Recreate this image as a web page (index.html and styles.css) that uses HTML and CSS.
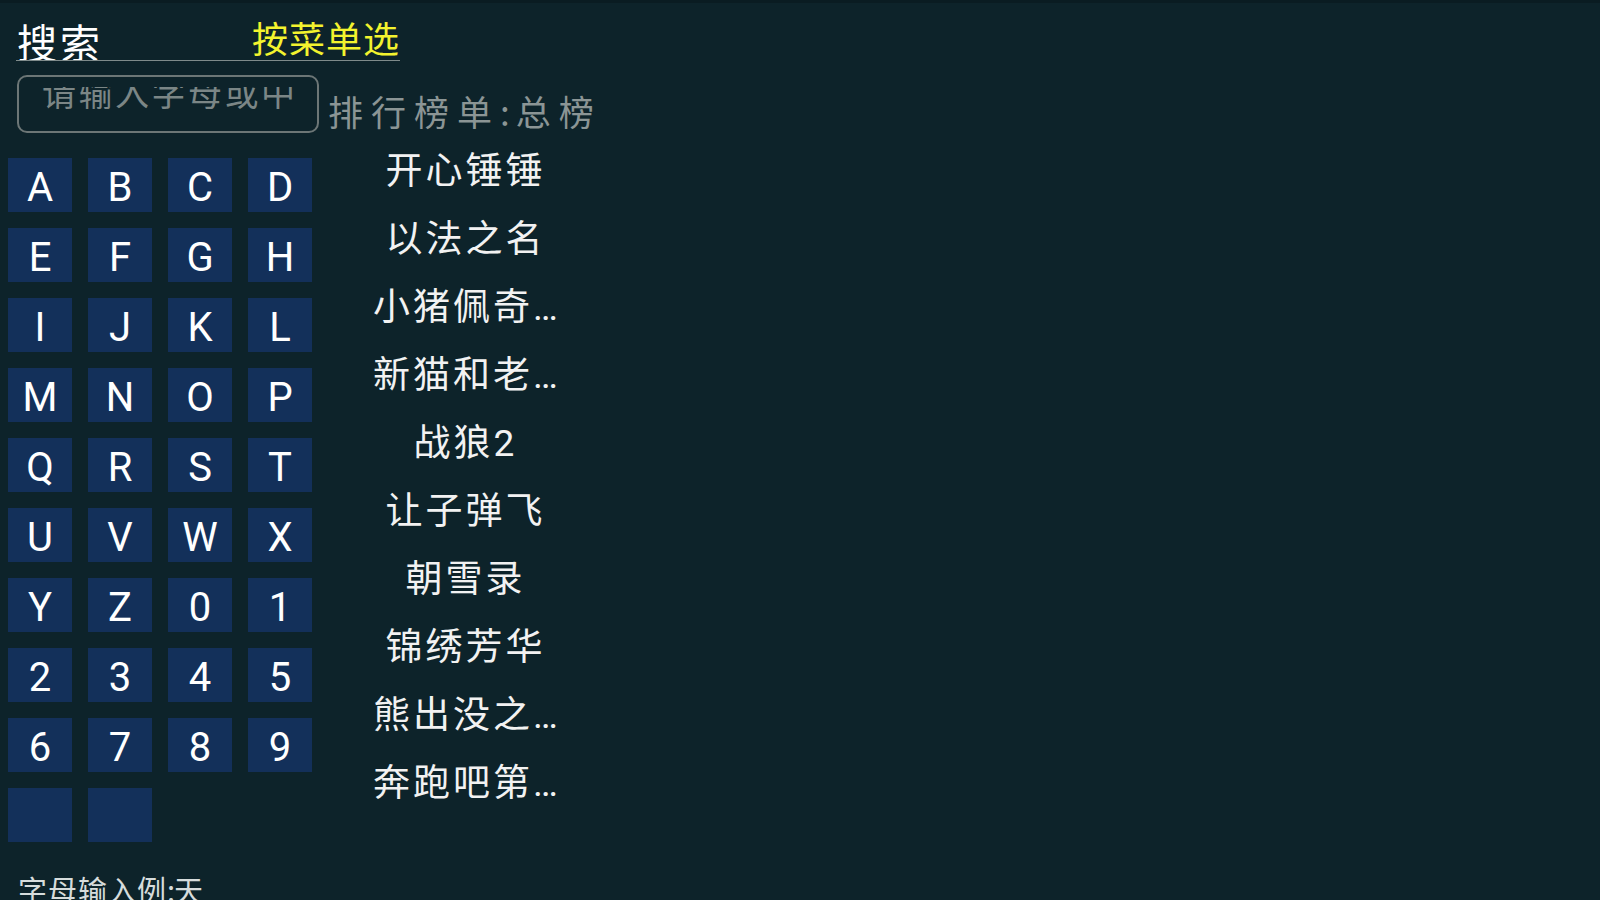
FILE: index.html
```html
<!DOCTYPE html>
<html lang="zh-CN">
<head>
<meta charset="utf-8">
<title>搜索</title>
<link rel="stylesheet" href="styles.css">
</head>
<body>
<div class="page">
  <div class="header">
    <div class="title">搜索</div>
    <div class="menu">按菜单选</div>
  </div>
  <div class="row2">
    <div class="input">
      <div class="ph-clip"><div class="ph">请输入字母或中文</div></div>
    </div>
    <div class="rank-title">排行榜单<span class="colon">:</span>总榜</div>
  </div>
  <div class="main">
    <div class="left">
      <div class="keypad">
        <div class="key">A</div><div class="key">B</div><div class="key">C</div><div class="key">D</div>
        <div class="key">E</div><div class="key">F</div><div class="key">G</div><div class="key">H</div>
        <div class="key">I</div><div class="key">J</div><div class="key">K</div><div class="key">L</div>
        <div class="key">M</div><div class="key">N</div><div class="key">O</div><div class="key">P</div>
        <div class="key">Q</div><div class="key">R</div><div class="key">S</div><div class="key">T</div>
        <div class="key">U</div><div class="key">V</div><div class="key">W</div><div class="key">X</div>
        <div class="key">Y</div><div class="key">Z</div><div class="key">0</div><div class="key">1</div>
        <div class="key">2</div><div class="key">3</div><div class="key">4</div><div class="key">5</div>
        <div class="key">6</div><div class="key">7</div><div class="key">8</div><div class="key">9</div>
        <div class="key"></div><div class="key"></div>
      </div>
      <div class="hint">字母输入<span class="hint-ex">例<span class="hint-colon">:</span>天</span></div>
    </div>
    <ul class="list">
      <li>开心锤锤</li>
      <li>以法之名</li>
      <li>小猪佩奇<span class="dots">…</span></li>
      <li>新猫和老<span class="dots">…</span></li>
      <li>战狼2</li>
      <li>让子弹飞</li>
      <li>朝雪录</li>
      <li>锦绣芳华</li>
      <li>熊出没之<span class="dots">…</span></li>
      <li>奔跑吧第<span class="dots">…</span></li>
    </ul>
  </div>
</div>
</body>
</html>
```

FILE: styles.css
```css
html, body {
  margin: 0;
  padding: 0;
}
body {
  width: 1600px;
  height: 900px;
  overflow: hidden;
  background: #0d232a;
  font-family: "Noto Sans CJK SC", "Roboto", sans-serif;
  color: #f2f2f2;
}
.page {
  height: 900px;
  border-top: 3px solid #0a1c22;
  box-sizing: border-box;
}
.header {
  margin-left: 16px;
  width: 384px;
  height: 58px;
  box-sizing: border-box;
  border-bottom: 1px solid #7f8b8b;
  display: flex;
  align-items: flex-start;
  overflow: hidden;
}
.title {
  font-size: 40px;
  line-height: 40px;
  letter-spacing: 3px;
  color: #ffffff;
  padding-top: 18px;
  margin-left: 1px;
}
.menu {
  margin-left: auto;
  font-size: 36px;
  line-height: 36px;
  letter-spacing: 1px;
  color: #f3f32e;
  padding-top: 16px;
}
.row2 {
  display: flex;
  align-items: flex-start;
  margin-top: 14px;
}
.input {
  margin-left: 17px;
  width: 302px;
  height: 58px;
  box-sizing: border-box;
  border: 2px solid #6c7676;
  border-radius: 10px;
}
.ph-clip {
  margin: 10px 0 0 23px;
  width: 255px;
  height: 30px;
  overflow: hidden;
  white-space: nowrap;
}
.ph {
  font-size: 34px;
  line-height: 34px;
  letter-spacing: 2.5px;
  color: #7b8686;
  margin-top: -12px;
}
.rank-title {
  margin-left: 9px;
  padding-top: 18px;
  font-size: 35px;
  line-height: 35px;
  letter-spacing: 8px;
  color: #8b9595;
  white-space: nowrap;
}
.colon {
  letter-spacing: 6px;
}
.main {
  display: flex;
  align-items: flex-start;
}
.left {
  margin-left: 8px;
  padding-top: 25px;
}
.keypad {
  display: grid;
  grid-template-columns: repeat(4, 64px);
  grid-auto-rows: 54px;
  column-gap: 16px;
  row-gap: 16px;
}
.key {
  background: #13305a;
  color: #ffffff;
  font-family: "Roboto", sans-serif;
  font-size: 40px;
  display: flex;
  align-items: center;
  justify-content: center;
  line-height: 1;
  padding-top: 5px;
  box-sizing: border-box;
}
.hint {
  margin-top: 32px;
  margin-left: 10px;
  font-size: 29px;
  line-height: 30px;
  letter-spacing: 1px;
  color: #d6dcdc;
  white-space: nowrap;
}
.hint-ex {
  margin-left: -1px;
}
.hint-colon {
  letter-spacing: -1px;
}
.list {
  list-style: none;
  margin: 0 0 0 18px;
  padding: 5px 0 0 0;
  width: 268px;
  font-family: "Roboto", "Noto Sans CJK SC", sans-serif;
  font-size: 37px;
  letter-spacing: 3px;
  text-indent: 3px;
  color: #f2f2f2;
}
.list li {
  height: 68px;
  line-height: 68px;
  text-align: center;
  white-space: nowrap;
}
.dots {
  letter-spacing: 0;
}
```
